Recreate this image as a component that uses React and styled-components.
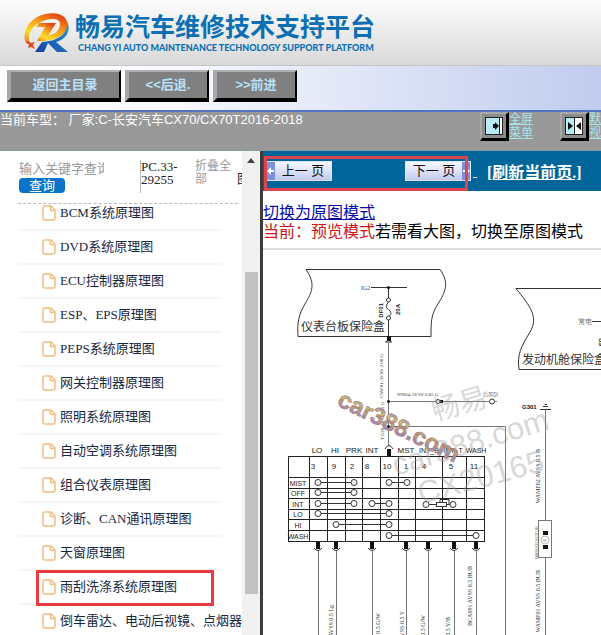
import React from 'react';
import styled, { createGlobalStyle } from 'styled-components';

const GlobalStyle = createGlobalStyle`
    *, *::after {
        box-sizing: border-box;
    }
    body {
        margin: 0;
        background: white;
        font-family: "Liberation Sans", "Noto Sans CJK SC", sans-serif;
    }
    button, input {
        font-family: inherit;
    }
`;

const Page = styled.div`
    display: flex;
    flex-direction: column;
    height: 100vh;
    overflow: hidden;
`;

const Header = styled.header`
    display: flex;
    align-items: center;
    gap: 5px;
    flex: none;
    height: 66px;
    padding-left: 23px;
    background: linear-gradient(#fdfdfd, #d9d9d9);
    border-bottom: 1px solid #c4c4c4;
`;

const Brand = styled.div`
    color: #0b70b3;
    font-weight: bold;
    white-space: nowrap;
`;

const BrandName = styled.h1`
    margin: 0;
    font-size: 25px;
    line-height: 30px;
`;

const BrandSub = styled.div`
    padding-left: 3px;
    font-family: Lato, sans-serif;
    font-size: 9px;
    font-weight: 900;
    line-height: 12px;
`;

const Toolbar = styled.nav`
    display: flex;
    gap: 4px;
    flex: none;
    height: 46px;
    padding: 4px 7px 8px;
    background: linear-gradient(to right, #ffffff, #f8f9fe 30%, #c0ccee);
    border-bottom: 2px solid #5272c2;
`;

const ToolButton = styled.button`
    width: ${props => (props.wide ? '114px' : '84px')};
    height: 32px;
    padding: 0;
    background: #808080;
    border-style: solid;
    border-width: 2px 2px 4px 4px;
    border-color: #b0b0b0 #000 #000 #a8a8a8;
    color: #b9e0fb;
    font-size: 13px;
    font-weight: bold;
    line-height: 24px;
    cursor: pointer;
`;

const InfoBar = styled.div`
    display: grid;
    grid-template-columns: 480px 80px 80px;
    flex: none;
    height: 39px;
    overflow: hidden;
    background: #999999;
    border-bottom: 1px solid #8a9a9a;
`;

const CarModel = styled.div`
    color: white;
    font-size: 13px;
    line-height: 15px;
    white-space: pre;
`;

const ViewMode = styled.div`
    display: flex;
`;

const ViewButton = styled.button`
    display: flex;
    align-items: center;
    justify-content: center;
    width: 29px;
    height: 29px;
    padding: 0;
    background: #8c8c8c;
    border-style: solid;
    border-width: 2px 3px 3px 2px;
    border-color: #a8a8a8 #000 #000 #a8a8a8;
`;

const ViewLink = styled.a`
    width: 24px;
    color: #a9e3ea;
    font-size: 12px;
    line-height: 14px;
`;

const Main = styled.main`
    display: flex;
    flex: 1;
    min-height: 0;
`;

const Sidebar = styled.aside`
    display: flex;
    flex: none;
    width: 263px;
    border-right: 3px solid #3c3c3c;
    font-family: "Liberation Serif", "Noto Sans CJK SC", serif;
`;

const SideContent = styled.div`
    width: 242px;
    overflow: hidden;
`;

const Search = styled.form`
    display: grid;
    grid-template-columns: 121px 55px 42px 12px;
    height: 53px;
    margin: 0 4px 0 18px;
    padding: 9px 0 11px 1px;
    border-bottom: 1px dashed #bbb;
    line-height: 13px;
    font-size: 13px;
`;

const SearchInput = styled.input`
    display: block;
    width: 85px;
    height: 18px;
    padding: 0;
    border: 0;
    font-size: 13px;
    &::placeholder {
        color: #999;
    }
`;

const SearchButton = styled.button`
    display: block;
    width: 46px;
    height: 15px;
    padding: 0;
    border: 0;
    border-radius: 4px;
    background: #0a74c8;
    color: white;
    font-size: 13px;
    line-height: 14px;
`;

const Code = styled.div`
    border-left: 1px solid #bbb;
    padding-right: 12px;
    color: #222;
`;

const FoldLink = styled.a`
    width: 36px;
    color: #999;
    font-size: 12px;
    text-decoration: none;
`;

const CutText = styled.span`
    padding-top: 12px;
    color: #222;
    white-space: nowrap;
`;

const DocList = styled.ul`
    margin: -7px 20px 0 19px;
    padding: 0;
    list-style: none;
`;

const DocItem = styled.li`
    position: relative;
    display: flex;
    align-items: center;
    gap: 4px;
    height: 34px;
    padding-left: 23px;
    border-bottom: 2px solid #f4f5f7;
    &::after {
        content: "";
        display: ${props => (props.marked ? 'block' : 'none')};
        position: absolute;
        top: -1px;
        left: 17px;
        width: 178px;
        height: 36px;
        border: 3px solid #e83a40;
    }
    svg {
        flex: none;
    }
`;

const DocLink = styled.a`
    padding-bottom: 4px;
    color: #17273f;
    font-size: 13px;
    text-decoration: none;
    white-space: nowrap;
`;

const Scrollbar = styled.div`
    display: flex;
    flex-direction: column;
    align-items: center;
    flex: 1;
    background: #f1f1f1;
`;

const ScrollUp = styled.div`
    margin: 7px 0 109px;
    border: 4px solid transparent;
    border-top: 0;
    border-bottom: 5px solid #444;
`;

const ScrollThumb = styled.div`
    width: 13px;
    height: 322px;
    background: #c1c1c1;
`;

const Viewer = styled.section`
    flex: 1;
    min-width: 0;
    overflow: hidden;
`;

const Pager = styled.div`
    position: relative;
    display: flex;
    align-items: center;
    height: 40px;
    padding: 0 3px;
    background: #006699;
`;

const PageButton = styled.button`
    display: flex;
    align-items: center;
    justify-content: space-between;
    flex: none;
    flex-direction: ${props => (props.next ? 'row-reverse' : 'row')};
    width: 66px;
    height: 20px;
    margin-right: ${props => (props.next ? '2px' : '73px')};
    padding: 0;
    background: linear-gradient(#f8f9ff, #c3caf0);
    border: 1px solid #dfe4fb;
    color: #111;
    font-size: 13px;
    line-height: 16px;
`;

const PageLabel = styled.span`
    flex: 1;
    text-align: center;
`;

const PageArrow = styled.span`
    display: flex;
    align-items: center;
    height: 18px;
    background: #7d90dc;
`;

const RefreshLink = styled.a`
    margin-right: 10px;
    color: white;
    font-family: "Liberation Serif", "Noto Sans CJK SC", serif;
    font-size: 16px;
    font-weight: bold;
    white-space: nowrap;
`;

const PagerMark = styled.div`
    position: absolute;
    top: 5px;
    left: 1px;
    width: 204px;
    height: 35px;
    border: 3px solid #dd4350;
`;

const ModeText = styled.div`
    height: 59px;
    padding-top: 12px;
    border-bottom: 2px solid #dcdcdc;
    font-size: 16px;
    line-height: 19px;
    white-space: nowrap;
`;

const ModeLink = styled.a`
    color: #0a0aa8;
`;

const CurrentMode = styled.span`
    color: #cc1414;
`;

const Diagram = styled.svg`
    display: block;
    text {
        font-family: "Liberation Sans", "Noto Sans CJK SC", sans-serif;
    }
    .wire {
        font-family: "Liberation Serif", serif;
    }
`;

const docs = [
    'BCM系统原理图',
    'DVD系统原理图',
    'ECU控制器原理图',
    'ESP、EPS原理图',
    'PEPS系统原理图',
    '网关控制器原理图',
    '照明系统原理图',
    '自动空调系统原理图',
    '组合仪表原理图',
    '诊断、CAN通讯原理图',
    '天窗原理图',
    '雨刮洗涤系统原理图',
    '倒车雷达、电动后视镜、点烟器'
];

const columns = [288, 309, 327, 345, 362, 380, 398, 415, 442, 466, 484];
const rows = [456, 477, 488, 498, 509, 519, 530, 541];
const heads = [['LO', 317], ['HI', 335], ['PRK', 354], ['INT', 372], ['MST', 406], ['INT_B', 429], ['INT_T', 453], ['WASH', 476]];
const pins = [['3', 313], ['9', 334], ['2', 352], ['8', 367], ['10', 387], ['1', 406], ['4', 424], ['5', 451], ['11', 474]];
const states = [['MIST', 483], ['OFF', 493], ['INT', 504], ['LO', 514], ['HI', 525], ['WASH', 536]];
const links = [
    [318, 354, 483], [389, 407, 483], [318, 354, 493], [318, 354, 504],
    [372, 389, 504], [318, 389, 514], [336, 389, 525], [389, 476, 536]
];
const plugs = [318, 336, 372, 406, 428, 454, 476];
// label, x of the baseline, y of the upper end, size
const wires = [
    ['CSW01.AVSS 2.00 G', 383, 354, 5],
    ['YG20.AVSS 0.5 G', 384, 402, 5],
    ['BLS02 AVSS 0.5 Lg', 333, 605, 6],
    ['AVSS 0.5 G/W', 380, 613, 6],
    ['AVSS 0.5 Y', 404, 611, 6],
    ['AVSS 0.5 G/W', 425, 615, 6],
    ['AVSS 0.5 Y/B', 450, 617, 6],
    ['BCA091 AVSS 0.5 BUB', 472, 566, 6],
    ['WAMF02 AVSS 0.5 B', 540, 449, 6],
    ['WAMF01 AVSS 0.5 BUB', 540, 570, 6]
];

const Logo = () => (
    <svg width="47" height="42" viewBox="0 0 47 42">
        <defs>
            <linearGradient id="flame" x1="0.8" y1="0" x2="0.2" y2="1">
                <stop offset="0" stopColor="#e23a14" />
                <stop offset="0.45" stopColor="#f8a81c" />
                <stop offset="0.75" stopColor="#fbdc2c" />
                <stop offset="1" stopColor="#f08a1c" />
            </linearGradient>
            <linearGradient id="leg" x1="0" y1="1" x2="1" y2="0">
                <stop offset="0" stopColor="#12409c" />
                <stop offset="1" stopColor="#2b9be0" />
            </linearGradient>
        </defs>
        <path d="M44 9C49 20 42 28 33 30L45 40H34L25 31L21 40H12L19 30C36 29 44 22 44 9Z" fill="url(#leg)" />
        <path d="M3 31C-2 20 6 6 22 2C36-1 46 4 44 15C42 25 31 29 15 29L19 24C31 24 37 19 37 12C37 7 31 6 23 8C11 11 3 21 7 32Z" fill="url(#flame)" />
        <path d="M16 11H33L22 29H14L22 15H13Z" fill="url(#flame)" />
        <path d="M5 29L8 31L12 30L10 33L12 37L8 35L5 36L6 33L3 30Z" fill="#df4a25" />
    </svg>
);

const FileIcon = () => (
    <svg width="14" height="16" viewBox="0 0 14 16" fill="none" stroke="#f1bf83" strokeWidth="1.5">
        <path d="M2.5 1H9L13 5V13.5Q13 15 11.5 15H2.5Q1 15 1 13.5V2.5Q1 1 2.5 1Z" />
        <path d="M8.5 1V5.5H13" />
    </svg>
);

const FullIcon = () => (
    <svg width="18" height="18" viewBox="0 0 18 18">
        <rect x="0.5" y="0.5" width="17" height="17" fill="#b9ebf7" stroke="#222" />
        <path d="M15 1H17V17H15Z" fill="white" />
        <path d="M14.5 1V17" stroke="#222" />
        <path d="M8 7H10V5L14 9L10 13V11H8Z" fill="#111" />
    </svg>
);

const SplitIcon = () => (
    <svg width="18" height="18" viewBox="0 0 18 18">
        <rect x="0.5" y="0.5" width="17" height="17" fill="white" stroke="#222" />
        <rect x="1" y="1" width="8" height="16" fill="#b9ebf7" />
        <path d="M9.5 1V17" stroke="#222" />
        <path d="M3 5L8 9L3 13ZM16 5L11 9L16 13Z" fill="#111" />
    </svg>
);

const ArrowIcon = ({ next }) => (
    <svg width="8" height="10" viewBox="0 0 8 10" fill="white">
        <path d={next ? 'M8 5L4 1V4H1V6H4V9Z' : 'M0 5L4 1V4H7V6H4V9Z'} />
    </svg>
);

const Wiring = () => (
    <Diagram width="338" height="385" viewBox="263 250 338 385">
        <defs>
            <linearGradient id="mark" x1="0" y1="0" x2="0.1" y2="0.6" spreadMethod="repeat">
                <stop offset="0" stopColor="#c9a777" />
                <stop offset="0.35" stopColor="#a583ae" />
                <stop offset="0.7" stopColor="#d3bd72" />
                <stop offset="1" stopColor="#b07f76" />
            </linearGradient>
        </defs>
        <g fill="none" stroke="#333">
            <path d="M306 269.5H440C450 284 445 292 438 304C431 314 431 322 431 336.5H298C297 322 299 314 305 304C312 292 316 284 306 269.5Z" />
            <path d="M601 288.5H516C530 306 539 317 530 332C521 347 517 354 519 369.5H601" />
            <path d="M371 287.5H407M388.5 287V298M388.5 320V336M592 321.5H601" />
            <path d="M388.5 302C384 308 388 309 389 310C392 312 391 316 389 316" />
            <circle cx="388.5" cy="300" r="2" />
            <circle cx="388.5" cy="318" r="2" />
            <circle cx="492" cy="401.5" r="2.5" fill="white" />
            <path d="M386 342Q389 338 391 342M385 342H392" />
            <path d="M540 409.5H551M543 406.5H548M544.5 404.5H547" />
        </g>
        <g fill="none" stroke="#777">
            <path d="M388.5 343V445M389 401.5H489M494 401.5H497M389 426.5H505.5V635" />
            <path d="M545.5 410V520M545.5 558V635" />
            <rect x="538.5" y="520.5" width="13" height="37" />
            <circle cx="545" cy="540" r="4" stroke="#bbb" />
        </g>
        <g fill="#111">
            <circle cx="388.5" cy="287.5" r="1.5" />
            <circle cx="388.5" cy="401.5" r="1.5" />
            <circle cx="388.5" cy="426.5" r="1.5" />
            <rect x="387" y="336" width="4" height="5" />
            <rect x="438" y="400" width="5" height="3" />
            <circle cx="438" cy="401.5" r="2" fill="white" stroke="#333" />
            <rect x="543" y="531" width="5" height="4" />
            <rect x="543" y="545" width="5" height="4" />
        </g>
        <text x="301" y="331" fontSize="12" fill="#333">仪表台板保险盒</text>
        <text x="522" y="364" fontSize="12" fill="#333">发动机舱保险盒</text>
        <text x="578" y="324" fontSize="7" fill="#777">常电</text>
        <text x="483" y="396" fontSize="5" fill="#777">后雨刮</text>
        <text className="wire" x="361" y="290" fontSize="6" fill="#444">IG2</text>
        <text className="wire" x="397" y="396" fontSize="5" fill="#444">WR04.AVSS 0.85 G</text>
        <text x="522" y="409" fontSize="6" fontWeight="bold" fill="#111">G301</text>
        <text x="543" y="542" fontSize="4" fill="#888">M</text>
        <g fill="#111" fontSize="6" fontWeight="bold" textAnchor="end">
            <text transform="translate(383 303) rotate(-90)">DF01</text>
            <text transform="translate(400 304) rotate(-90)">20A</text>
            <text transform="translate(603 338) rotate(-90)">SB</text>
        </g>
        <text transform="translate(538 526) rotate(-90)" fontSize="4" fill="#777" textAnchor="end">WASHER MOTOR</text>
        <g fill="#333" textAnchor="end">
            {wires.map(([label, x, y, size]) => (
                <text className="wire" key={label + x} fontSize={size} transform={`translate(${x} ${y}) rotate(-90)`}>{label}</text>
            ))}
        </g>

        <g fill="none" stroke="#222">
            {columns.map(x => <path key={x} d={`M${x + 0.5} 456V542`} />)}
            {rows.map(y => <path key={y} d={`M288 ${y + 0.5}H485`} />)}
        </g>
        <g fontSize="8" fill="#222" textAnchor="middle">
            {heads.map(([label, x]) => <text key={label} x={x} y="453" fontSize={label.length > 3 ? 7 : 8}>{label}</text>)}
            {pins.map(([label, x]) => <text key={label} x={x} y="469">{label}</text>)}
            {states.map(([label, y]) => <text key={label} x="298" y={y + 3} fontSize="7">{label}</text>)}
        </g>
        <g fill="white" stroke="#333">
            {links.map(([from, to, y]) => (
                <g key={from + '-' + y}>
                    <path d={`M${from} ${y - 0.5}H${to}`} />
                    <circle cx={from} cy={y - 0.5} r="3" />
                    <circle cx={to} cy={y - 0.5} r="3" />
                </g>
            ))}
            <path d="M426 504.5H453" />
            <path d="M440 502V499.5H449V504" fill="none" />
            <rect x="436.5" y="502.5" width="10" height="4" />
            <circle cx="426" cy="504.5" r="3" />
            <circle cx="453" cy="504.5" r="3" />
        </g>
        {plugs.map(x => (
            <g key={x} fill="none" stroke="#333">
                <path d={`M${x - 4} 548Q${x} 553 ${x + 4} 548`} />
                <path d={`M${x + 0.5} 551V635`} stroke="#777" />
                <rect x={x - 2} y="542" width="4" height="7" fill="#111" stroke="none" />
            </g>
        ))}
        <path d="M385 449Q389 442 393 449" fill="none" stroke="#333" />
        <rect x="387" y="449" width="4" height="7" fill="#111" />

        <g fill="#999" fillOpacity="0.4">
            <text transform="translate(435 421) rotate(-16)" fontSize="28">畅易</text>
            <text transform="translate(396 476) rotate(-17)" fontSize="31">car388.com</text>
            <text transform="translate(421 504) rotate(-15)" fontSize="31">CX20165</text>
        </g>
        <text
            transform="translate(336 405) rotate(26)"
            fontSize="24"
            fontWeight="bold"
            fill="url(#mark)"
            stroke="#8d7580"
            strokeWidth="0.5"
        >
            car388.com
        </text>
    </Diagram>
);

const App = () => {
    return (
        <Page>
            <GlobalStyle />
            <Header>
                <Logo />
                <Brand>
                    <BrandName>畅易汽车维修技术支持平台</BrandName>
                    <BrandSub>CHANG YI AUTO MAINTENANCE TECHNOLOGY SUPPORT PLATFORM</BrandSub>
                </Brand>
            </Header>
            <Toolbar>
                <ToolButton wide={1}>返回主目录</ToolButton>
                <ToolButton>&lt;&lt;后退.</ToolButton>
                <ToolButton>&gt;&gt;前进</ToolButton>
            </Toolbar>
            <InfoBar>
                <CarModel>当前车型： 厂家:C-长安汽车CX70/CX70T2016-2018</CarModel>
                <ViewMode>
                    <ViewButton aria-label="全屏菜单"><FullIcon /></ViewButton>
                    <ViewLink href="#">全屏菜单</ViewLink>
                </ViewMode>
                <ViewMode>
                    <ViewButton aria-label="默认视图"><SplitIcon /></ViewButton>
                    <ViewLink href="#">默认视图</ViewLink>
                </ViewMode>
            </InfoBar>
            <Main>
                <Sidebar>
                    <SideContent>
                        <Search>
                            <div>
                                <SearchInput aria-label="输入关键字查询" placeholder="输入关键字查询" />
                                <SearchButton type="button">查询</SearchButton>
                            </div>
                            <Code>PC.33-29255</Code>
                            <FoldLink href="#">折叠全部</FoldLink>
                            <CutText>图</CutText>
                        </Search>
                        <DocList>
                            {docs.map(name => (
                                <DocItem key={name} marked={name === '雨刮洗涤系统原理图' ? 1 : 0}>
                                    <FileIcon />
                                    <DocLink href="#">{name}</DocLink>
                                </DocItem>
                            ))}
                        </DocList>
                    </SideContent>
                    <Scrollbar>
                        <ScrollUp />
                        <ScrollThumb />
                    </Scrollbar>
                </Sidebar>
                <Viewer>
                    <Pager>
                        <PageButton>
                            <PageArrow><ArrowIcon /></PageArrow>
                            <PageLabel>上一 页</PageLabel>
                        </PageButton>
                        <PageButton next={1}>
                            <PageArrow><ArrowIcon next /></PageArrow>
                            <PageLabel>下一 页</PageLabel>
                        </PageButton>
                        <RefreshLink href="#">&nbsp;</RefreshLink>
                        <RefreshLink href="#">[刷新当前页.]</RefreshLink>
                        <PagerMark />
                    </Pager>
                    <ModeText>
                        <ModeLink href="#">切换为原图模式</ModeLink>
                        <br />
                        <CurrentMode>当前：预览模式</CurrentMode>若需看大图，切换至原图模式
                    </ModeText>
                    <Wiring />
                </Viewer>
            </Main>
        </Page>
    );
};

export default App;
